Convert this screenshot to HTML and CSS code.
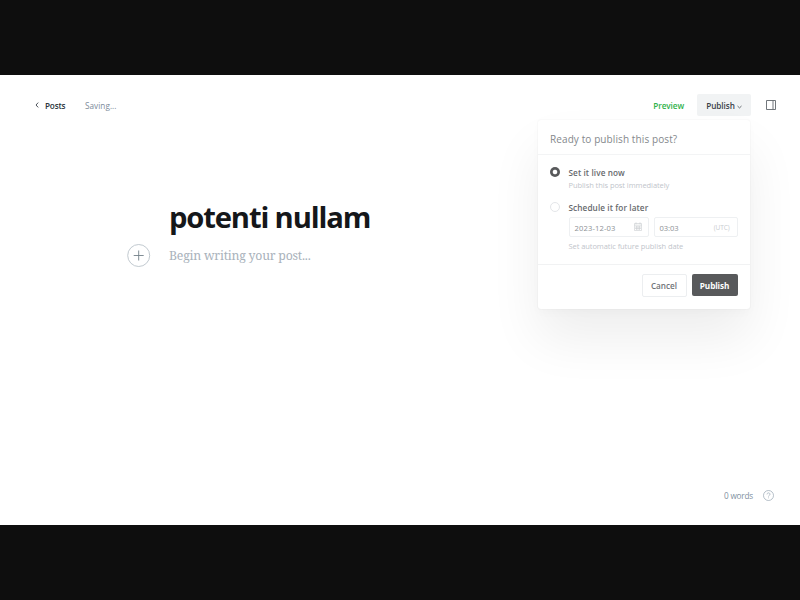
FILE: index.html
```html
<!DOCTYPE html>
<html lang="en">
<head>
<meta charset="utf-8">
<title>Editor</title>
<link rel="stylesheet" href="styles.css">
</head>
<body>
<main class="editor">
  <header class="bar">
    <a class="back"><svg class="chevron-left" viewBox="0 0 4 6"><path d="M3.2 .6 1 3l2.2 2.4"/></svg><span class="posts">Posts</span></a>
    <span class="status">Saving...</span>
    <span class="preview">Preview</span>
    <button class="publish-trigger"><span class="trigger-label">Publish</span><svg class="chevron-down" viewBox="0 0 6 4"><path d="M.6 .8 3 3.1 5.4 .8"/></svg></button>
    <svg class="sidebar-icon" viewBox="0 0 10 10"><path d="M.5 .5h9v9h-9zM7 .5v9"/></svg>
    <section class="menu">
      <h2 class="menu-title"><span>Ready to publish this post?</span></h2>
      <div class="options">
        <div class="option">
          <i class="radio checked"></i>
          <div class="option-body"><div class="label live">Set it live now</div><div class="hint now">Publish this post immediately</div></div>
        </div>
        <div class="option second">
          <i class="radio"></i>
          <div class="option-body">
            <div class="label later">Schedule it for later</div>
            <div class="fields">
              <div class="field date"><span class="date-text">2023-12-03</span><svg class="calendar" viewBox="0 0 8 9"><path d="M.5 1.5h7v7h-7zM.5 3.2h7M2 .3v2M6 .3v2M2.5 4v4M4 4v4M5.5 4v4M1 5h6M1 6.5h6"/></svg></div>
              <div class="field time"><span class="time-text">03:03</span><span class="utc">(UTC)</span></div>
            </div>
            <div class="hint auto">Set automatic future publish date</div>
          </div>
        </div>
      </div>
      <footer class="actions"><button class="btn cancel"><span>Cancel</span></button><button class="btn primary"><span>Publish</span></button></footer>
    </section>
  </header>
  <article class="post">
    <h1 class="title"><span>potenti nullam</span></h1>
    <div class="body-row">
      <svg class="plus" viewBox="0 0 24 24"><circle cx="11.7" cy="12.5" r="11"/><path d="M11.7 7.5v10M6.7 12.5h10"/></svg>
      <p class="placeholder"><span>Begin writing your post...</span></p>
    </div>
  </article>
  <div class="stats"><span class="words">0 words</span><svg class="help" viewBox="0 0 11 11"><circle cx="5.5" cy="5.5" r="5"/><path d="M4 4.4c0-2 3-2 3-.1 0 1.1-1.5 1-1.5 2.2M5.5 7.5v.8"/></svg></div>
</main>
</body>
</html>
```
FILE: styles.css
```css
* { box-sizing: border-box; }
body {
  margin: 0;
  height: 600px;
  padding: 75px 0;
  overflow: hidden;
  background: #0e0e0e;
  font-family: "Open Sans", "Noto Sans", sans-serif;
}
h1, h2, p { margin: 0; }
button { border: 0; padding: 0; font-family: inherit; }
svg { display: block; fill: none; flex: none; overflow: visible; }
span, .label, .hint { white-space: nowrap; }
.editor { display: flex; flex-direction: column; height: 450px; background: #fff; }

.bar { position: relative; display: flex; align-items: center; height: 22px; margin-top: 19px; padding: 0 24px 0 35px; font-size: 8.2px; }
.back { display: flex; align-items: center; width: 50px; gap: 6px; color: #2b343b; }
.chevron-left { width: 4px; height: 6px; stroke: #394047; stroke-width: .9; }
.posts { font-weight: 600; letter-spacing: -.2px; }
.status { color: #7c8b9a; letter-spacing: .04px; }
.preview { margin-left: auto; margin-right: 13px; color: #30b24b; font-weight: 600; letter-spacing: -.08px; }
.publish-trigger { display: flex; align-items: center; justify-content: center; gap: 2px; width: 54px; height: 22px; border-radius: 2px; background: #f1f3f4; color: #394047; font-size: 8.2px; font-weight: 600; letter-spacing: -.06px; }
.chevron-down { width: 5px; height: 4px; margin-top: 3px; stroke: #394047; stroke-width: .9; }
.sidebar-icon { width: 10px; height: 10px; margin-left: 15px; stroke: #62686d; stroke-width: .9; }

.menu { position: absolute; left: 537.5px; top: 25.5px; width: 212px; height: 189px; background: #fff; border-radius: 3px; box-shadow: 0 0 2px rgba(0,0,0,.07), 0 4px 10px rgba(0,0,0,.02), 0 30px 52px rgba(0,0,0,.07); }
.menu-title { display: flex; align-items: center; height: 35px; padding: 5px 12px 0 12.5px; border-bottom: 1px solid #f3f4f5; color: #84888c; font-size: 10px; font-weight: 400; letter-spacing: .1px; }
.options { height: 109px; padding: 11px 12px 0; }
.option { display: flex; gap: 9px; height: 35px; }
.radio { flex: none; width: 10px; height: 10px; margin-top: 1px; border: 1px solid #e4e6e9; border-radius: 50%; }
.radio.checked { border: 0; background: radial-gradient(circle, #fff 1.9px, #58595b 2.7px); }
.label { height: 13px; line-height: 13px; color: #66696d; font-size: 8.2px; font-weight: 600; letter-spacing: .1px; }
.hint { height: 12px; line-height: 12px; color: #bfc5cb; font-size: 7.5px; letter-spacing: -.07px; }
.fields { display: flex; gap: 5px; margin: 3px 0 3px; }
.field { display: flex; align-items: center; justify-content: space-between; height: 20px; padding: 2px 6px 0 5px; border: 1px solid #eef0f2; border-radius: 2px; color: #8d9195; font-size: 7.6px; }
.date { width: 80px; }
.date-text { letter-spacing: .13px; }
.time { width: 84px; padding-right: 7px; }
.time-text { letter-spacing: -.05px; }
.utc { color: #c9cdd1; font-size: 6.5px; letter-spacing: -.1px; }
.calendar { width: 8px; height: 9px; margin-top: -2px; stroke: #c9cdd0; stroke-width: .6; }
.actions { display: flex; justify-content: flex-end; gap: 5px; height: 44px; padding: 9px 12px 0; border-top: 1px solid #f1f2f3; }
.btn { display: flex; align-items: center; justify-content: center; height: 22px; border-radius: 2px; font-size: 8.2px; font-weight: 600; }
.cancel { width: 45px; height: 23px; border: 1px solid #eceef0; background: #fff; color: #6f7377; }
.primary { width: 46px; padding-top: 1px; background: #58595b; color: #fff; font-weight: 700; letter-spacing: -.12px; }

.post { margin-top: 80px; padding-left: 127px; }
.title { height: 46px; padding-left: 42px; line-height: 42px; color: #15171a; font-size: 29.2px; font-weight: 700; letter-spacing: -1.15px; }
.body-row { display: flex; align-items: center; gap: 18px; height: 24px; margin-top: 1px; }
.plus { width: 24px; height: 24px; stroke: #bac3ca; stroke-width: .9; }
.plus path { stroke: #738089; }
.placeholder { color: #a9b2bb; font-family: "Noto Serif", "Liberation Serif", serif; font-size: 12.3px; letter-spacing: -.22px; }
.stats { display: flex; align-items: center; justify-content: flex-end; gap: 10px; height: 12px; margin: auto 26px 24px 0; color: #8090a0; font-size: 8.2px; letter-spacing: -.2px; }
.help { width: 11px; height: 11px; stroke: #97a5b2; stroke-width: .7; }
```
